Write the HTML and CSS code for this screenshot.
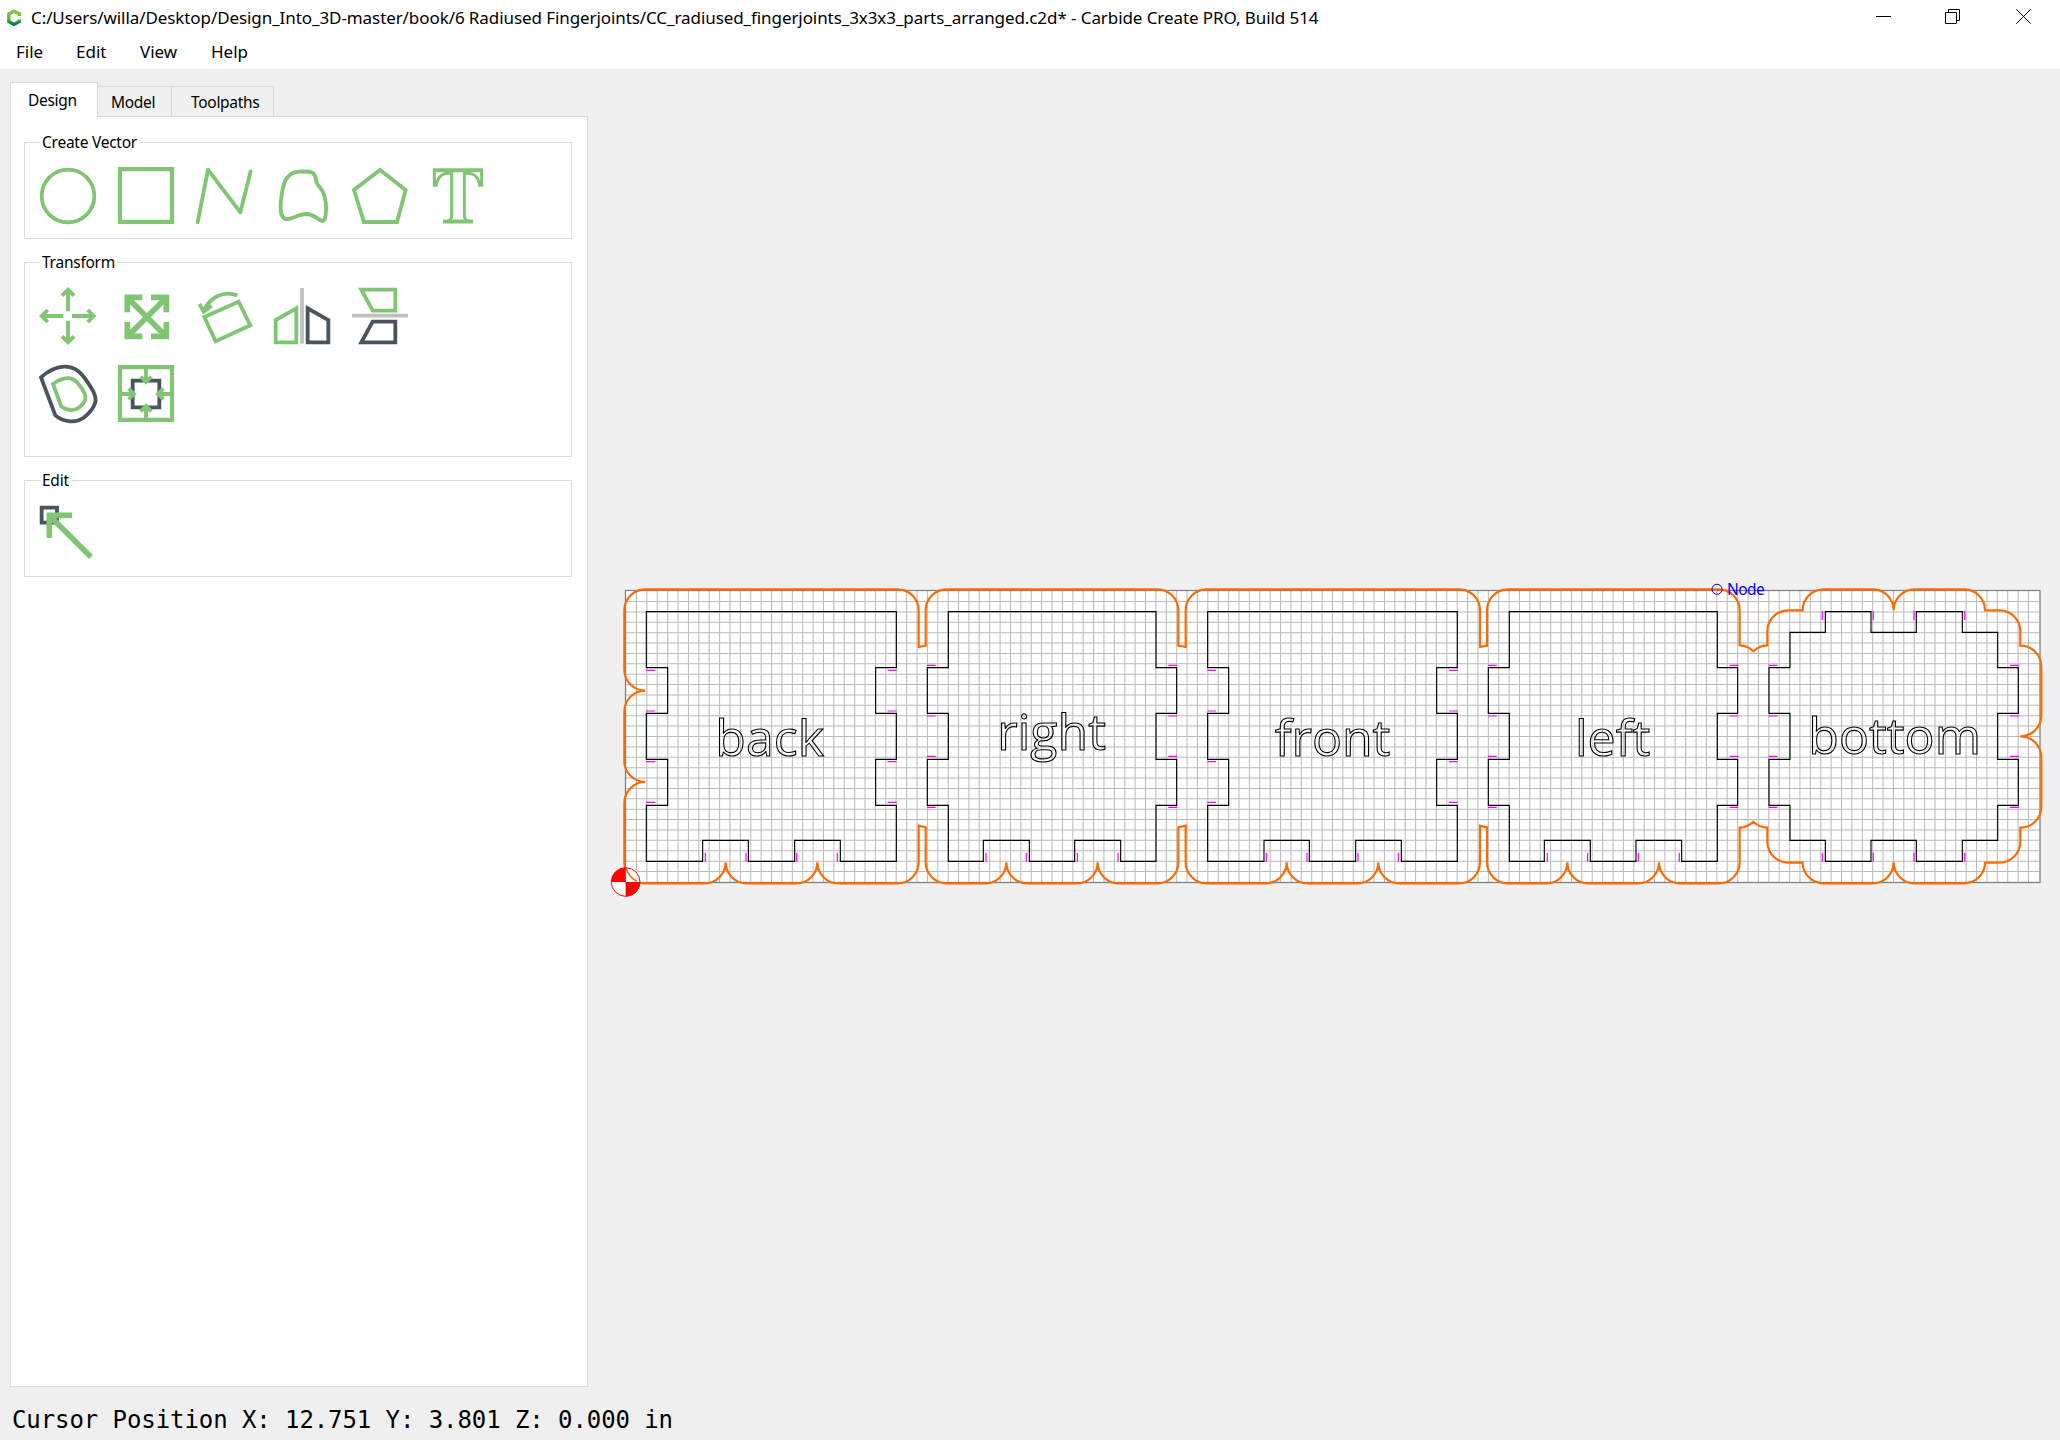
FILE: index.html
```html
<!DOCTYPE html>
<html lang="en">
<head>
<meta charset="utf-8">
<title>Carbide Create PRO</title>
<link rel="stylesheet" href="styles.css">
</head>
<body>
<div class="app">
  <header class="titlebar">
    <svg class="logo" viewBox="0 0 16 18"><defs><linearGradient id="lg" x1="0" y1="0" x2="0" y2="1"><stop offset="0" stop-color="#8dc63f"/><stop offset=".55" stop-color="#5cb848"/><stop offset="1" stop-color="#007a3d"/></linearGradient></defs><path d="M13.4 7V4.8L8 2.2 2.8 5v7.4L8 15.4l5.4-3V10.600" fill="none" stroke="url(#lg)" stroke-width="3.400"/></svg>
    <span class="title">C:/Users/willa/Desktop/Design_Into_3D-master/book/6 Radiused Fingerjoints/CC_radiused_fingerjoints_3x3x3_parts_arranged.c2d* - Carbide Create PRO, Build 514</span>
    <div class="controls">
      <svg viewBox="0 0 16 16"><path d="M0 7.500H15"/></svg>
      <svg viewBox="0 0 16 16"><path d="M.5 3.500H11.500V14.500H.5ZM3.500 3.500V.5H14.500V11.500H11.500"/></svg>
      <svg viewBox="0 0 16 16"><path d="M.3 .3 14.700 14.700M14.700 .3 .3 14.700"/></svg>
    </div>
  </header>
  <nav class="menubar"><span class="m-file">File</span><span class="m-edit">Edit</span><span class="m-view">View</span><span class="m-help">Help</span></nav>
  <main class="workspace">
    <aside class="sidebar">
      <div class="tabs"><div class="tab tab-active">Design</div><div class="tab tab-model">Model</div><div class="tab tab-tool">Toolpaths</div></div>
      <div class="panel">
        <section class="group group-create">
          <h2 class="group-title t-create">Create Vector</h2>
          <div class="tools">
            <svg class="icon" viewBox="54 48 180 180"><circle cx="144" cy="138" r="79"/></svg>
            <svg class="icon" viewBox="288 48 180 180"><path stroke-width="12.500" d="M300 57.500H456V215.500H300Z"/></svg>
            <svg class="icon round" viewBox="522 48 180 180"><path d="M533 217 564 59 661 187 692 64"/></svg>
            <svg class="icon round" viewBox="756 48 180 180"><path d="M836 65C855 64 868 64 877 68C889 74 886 86 890 98C894 108 904 114 909 126C917 146 920 173 917 195C914 214 910 216 900 210C886 202 878 193 860 192C833 192 820 207 800 208C782 206 781 184 782 160C784 137 786 113 796 92C805 75 820 66 836 65Z"/></svg>
            <svg class="icon" viewBox="990 48 180 180"><path d="M1080 60 1157 120 1131 216H1032L1002 120Z"/></svg>
            <svg class="icon" viewBox="1224 48 180 180"><path stroke-width="9" d="M1243 60H1385V106H1379C1374 78 1362 69 1333 69V196Q1333 211 1346 214H1282Q1295 211 1295 196V69C1266 69 1254 78 1249 106H1243Z"/><path d="M1239 61H1389M1269 215H1359"/></svg>
          </div>
        </section>
        <section class="group group-transform">
          <h2 class="group-title t-transform">Transform</h2>
          <div class="tools">
            <svg class="icon" viewBox="54 408 180 180"><path d="M144 484V419M126 437 144 419 162 437M144 512V577M126 559 144 577 162 559M130 498H65M83 480 65 498 83 516M156 498H221M203 480 221 498 203 516"/></svg>
            <svg class="icon" viewBox="288 408 180 180"><g stroke-width="17"><path d="M324 445 437 558M437 445 324 558"/><path d="M367 442H322V487M393 442H439V487M322 516V559H367M393 559H439V516"/></g><path class="fill" d="M316 436H352L316 472ZM445 436V472L409 436ZM316 566V530L352 566ZM445 566H409L445 530Z"/></svg>
            <svg class="icon" viewBox="522 408 180 180"><path d="M553 501 656 455 691 526 587 574ZM652 436C612 421 569 440 551 483M538 462 551 485 575 467"/></svg>
            <svg class="icon" viewBox="756 408 180 180"><path class="grey" d="M846 414V581"/><path d="M829 475V577H767V510Z"/><path class="dark" d="M863 475V577H925V510Z"/></svg>
            <svg class="icon" viewBox="990 408 180 180"><path class="grey" d="M996 497H1164"/><path d="M1024 419H1126V482H1058Z"/><path class="dark" d="M1024 577H1126V515H1058Z"/></svg>
          </div>
          <div class="tools">
            <svg class="icon" viewBox="54 642 180 180"><path class="dark" d="M63 682C82 665 106 652 130 650C166 648 184 669 201 694C218 719 230 737 226 757C220 778 206 792 190 804C165 821 128 815 106 796Z"/><path d="M99 702C118 688 134 682 151 685C170 689 178 705 187 718C197 734 200 744 192 757C175 781 151 788 124 770Z"/></svg>
            <svg class="icon" viewBox="288 642 180 180"><path stroke-width="12.500" d="M300 651.500H456V809.500H300Z"/><path class="dark" d="M338 692H418V772H338Z"/><path d="M378 655V692M362 680 378 696 394 680M378 806V772M362 784 378 768 394 784M304 732H338M326 716 342 732 326 748M452 732H418M430 716 414 732 430 748"/></svg>
          </div>
        </section>
        <section class="group group-edit">
          <h2 class="group-title t-edit">Edit</h2>
          <div class="tools">
            <svg class="icon" viewBox="54 1062 180 180"><path class="dark" d="M65 1073H111V1118H65Z"/><path stroke-width="17" d="M156 1096H88V1164M92 1100 213 1221"/></svg>
          </div>
        </section>
      </div>
    </aside>
    <svg class="canvas" viewBox="605 69 1455 1328">
      <rect x="625.5" y="590.5" width="1414.500" height="292" fill="#fff"/>
      <path class="grid" stroke-width="1414" stroke-dasharray="1 9.385" d="M1332.750 601V875"/>
      <path class="grid" stroke-width="292" stroke-dasharray="1 9.388" d="M636 736.500H2034"/>
      <rect x="625.5" y="590.5" width="1414.500" height="292" class="stock"/>
      <g transform="translate(600 570) scale(.33333)">
        <g>
          <path class="part" d="M139 125H889V293H827V430H889V568H827V706H889V874H721V811H584V874H445V811H308V874H139V706H203V568H139V430H203V293H139Z"/>
          <path class="mark" d="M138 301h27M138 423h27M138 575h27M138 697h27M863 301h27M863 423h27M863 575h27M863 697h27M316 848v27M438 848v27M590 848v27M712 848v27"/>
          <text class="label" x="346" y="557">back</text>
        </g>
        <g transform="translate(930)">
          <path class="part" d="M115 125H738V293H800V430H738V568H800V706H738V874H632V811H494V874H358V811H220V874H115V706H52V568H115V430H52V293H115Z"/>
          <path class="mark" d="M51 286h26M51 438h26M51 559h26M51 712h26M775 286h26M775 438h26M775 559h26M775 712h26M228 848v27M349 848v27M502 848v27M624 848v27"/>
          <text class="label" x="262" y="539">right</text>
        </g>
        <g transform="translate(1710)">
          <path class="part" d="M113 125H862V293H800V430H862V568H800V706H862V874H694V811H557V874H418V811H282V874H113V706H176V568H113V430H176V293H113Z"/>
          <path class="mark" d="M112 301h26M112 423h26M112 575h26M112 697h26M837 301h26M837 423h26M837 575h26M837 697h26M289 848v27M411 848v27M564 848v27M685 848v27"/>
          <text class="label" x="314" y="557">front</text>
        </g>
        <g transform="translate(2610)">
          <path class="part" d="M118 125H742V293H803V430H742V568H803V706H742V874H635V811H498V874H361V811H223V874H118V706H55V568H118V430H55V293H118Z"/>
          <path class="mark" d="M54 286h26M54 438h26M54 559h26M54 712h26M779 286h26M779 438h26M779 559h26M779 712h26M232 848v27M353 848v27M505 848v27M628 848v27"/>
          <text class="label" x="315" y="557">left</text>
        </g>
        <g transform="translate(3390)">
          <path class="part" d="M286 125H423V187H559V125H697V187H803V293H865V430H803V568H865V706H803V811H697V874H559V811H423V874H286V811H180V706H117V568H180V430H117V293H180V187H286Z"/>
          <path class="mark" d="M116 286h26M116 438h26M116 559h26M116 712h26M840 286h27M840 438h27M840 559h27M840 712h27M277 123v27M430 123v27M552 123v27M704 123v27M277 848v27M430 848v27M552 848v27M704 848v27"/>
          <text class="label" x="235" y="553">bottom</text>
        </g>
        <path class="profile" d="M73 121A63 63 0 0 1 136 58H893A63 63 0 0 1 956 121V231L977 227V121A63 63 0 0 1 1040 58H1672A63 63 0 0 1 1735 121V227L1757 231V121A63 63 0 0 1 1820 58H2577A63 63 0 0 1 2640 121V231L2661 227V121A63 63 0 0 1 2724 58H3356A63 63 0 0 1 3419 121V226A63 63 0 0 1 3460 244A63 63 0 0 1 3502 226V184A63 63 0 0 1 3565 121H3608A63 63 0 0 1 3671 58H3818A63 63 0 0 1 3881 121A63 63 0 0 1 3944 58H4092A63 63 0 0 1 4155 121H4198A63 63 0 0 1 4261 184V227A63 63 0 0 1 4324 290V437A63 63 0 0 1 4261 499A63 63 0 0 1 4324 562V710A63 63 0 0 1 4261 773V815A63 63 0 0 1 4198 878H4155A63 63 0 0 1 4092 940H3944A63 63 0 0 1 3881 877A63 63 0 0 1 3818 940H3671A63 63 0 0 1 3608 878H3565A63 63 0 0 1 3502 815V773A63 63 0 0 1 3460 755A63 63 0 0 1 3419 773V877A63 63 0 0 1 3356 940H3240A63 63 0 0 1 3177 877A63 63 0 0 1 3114 940H2965A63 63 0 0 1 2902 877A63 63 0 0 1 2839 940H2724A63 63 0 0 1 2661 877V772L2640 767V877A63 63 0 0 1 2577 940H2398A63 63 0 0 1 2335 877A63 63 0 0 1 2272 940H2123A63 63 0 0 1 2060 877A63 63 0 0 1 1997 940H1820A63 63 0 0 1 1757 877V767L1735 772V877A63 63 0 0 1 1672 940H1556A63 63 0 0 1 1493 877A63 63 0 0 1 1430 940H1282A63 63 0 0 1 1219 877A63 63 0 0 1 1156 940H1040A63 63 0 0 1 977 877V772L956 767V877A63 63 0 0 1 893 940H715A63 63 0 0 1 652 877A63 63 0 0 1 589 940H440A63 63 0 0 1 377 877A63 63 0 0 1 314 940H136A63 63 0 0 1 73 877V699A63 63 0 0 1 136 636A63 63 0 0 1 73 573V425A63 63 0 0 1 136 362A63 63 0 0 1 73 299Z"/>
        <path fill="#fff" d="M77 936H34A43 43 0 0 0 77 979Z"/>
        <path fill="#fff" d="M77 936V893A43 43 0 0 1 120 936Z"/>
        <path fill="none" stroke="#ff6a00" stroke-width="5" d="M77 893Q86 920 110 934"/>
        <path fill="#f00" d="M77 936V893A43 43 0 0 0 34 936ZM77 936V979A43 43 0 0 0 120 936Z"/>
        <circle cx="77" cy="936" r="43" fill="none" stroke="#f00" stroke-width="3"/>
      </g>
      <circle cx="1717" cy="589.300" r="5" fill="none" stroke="#00f"/>
      <text class="node" x="1727" y="594.500">Node</text>
    </svg>
  </main>
  <footer class="status">Cursor Position X: 12.751 Y: 3.801 Z: 0.000 in</footer>
</div>
</body>
</html>
```
FILE: styles.css
```css
* { box-sizing: border-box; }
body { margin: 0; font-family: "Noto Sans", sans-serif; color: #000; background: #efefef; }
.app { width: 2060px; height: 1440px; display: flex; flex-direction: column; overflow: hidden; }
.titlebar { height: 36px; background: #fff; display: flex; align-items: center; padding-left: 6px; }
.logo { width: 16px; height: 18px; margin-right: 9px; }
.title { font-size: 17px; line-height: 35px; height: 36px; letter-spacing: -.083px; white-space: nowrap; }
.controls { margin-left: auto; display: flex; gap: 54px; padding-right: 28px; margin-top: -2px; }
.controls svg { width: 16px; height: 16px; fill: none; stroke: #000; stroke-width: 1; }
.controls svg:nth-child(2) { margin-left: -1px; margin-right: 1px; }
.menubar { height: 33px; background: #fff; display: flex; font-size: 17px; line-height: 31px; padding-left: 16px; }
.m-file { width: 60px; }
.m-edit { width: 64px; }
.m-view { width: 71px; }
.workspace { height: 1328px; display: flex; }
.sidebar { width: 605px; padding: 13px 17px 10px 10px; display: flex; flex-direction: column; }
.tabs { display: flex; align-items: flex-end; height: 34px; font-size: 15.5px; letter-spacing: -.3px; }
.tab { height: 30px; border: 1px solid #d9d9d9; border-left: 0; border-bottom: 0; line-height: 30px; white-space: nowrap; background: #f0f0f0; }
.tab-active { width: 88px; height: 35px; margin-bottom: -1px; border-left: 1px solid #d9d9d9; background: #fff; padding-left: 17px; line-height: 35px; position: relative; }
.tab-model { width: 74px; padding-left: 13px; }
.tab-tool { width: 102px; padding-left: 19px; }
.panel { width: 578px; height: 1271px; background: #fff; border: 1px solid #d9d9d9; padding: 25px 14px 0 13px; display: flex; flex-direction: column; }
.group { border: 1px solid #dcdcdc; width: 548px; padding-left: 13px; }
.group-create { height: 97px; margin-bottom: 23px; }
.group-transform { height: 195px; margin-bottom: 23px; }
.group-edit { height: 97px; }
.group-title { font-size: 15.5px; letter-spacing: -.25px; font-weight: 400; line-height: 22px; height: 22px; margin: -12px 0 13px 2px; padding: 0 3px 0 2px; background: #fff; width: max-content; }
.tools { display: flex; gap: 18px; margin-bottom: 18px; }
.icon { width: 60px; height: 60px; fill: none; stroke: #80c474; stroke-width: 11.5; }
.round { stroke-linecap: round; stroke-linejoin: round; }
.icon .dark { stroke: #4a545c; }
.icon .grey { stroke: #c0c0c0; }
.icon .fill { fill: #80c474; stroke: none; }
.canvas { width: 1455px; height: 1328px; background: #f0f0f0; }
.grid { stroke: #bababa; fill: none; }
.stock { fill: none; stroke: #808080; stroke-width: 1.3; }
.part { fill: none; stroke: #000; stroke-width: 3.4; }
.mark { fill: none; stroke: #f0f; stroke-width: 3.6; }
.profile { fill: none; stroke: #ff6a00; stroke-width: 6.5; }
.label { font-family: "Open Sans", sans-serif; font-size: 150px; fill: none; stroke: #000; stroke-width: 3.3; }
.node { font-size: 15.5px; letter-spacing: -.6px; fill: #00f; }
.status { height: 43px; padding-left: 12px; font-family: "DejaVu Sans Mono", monospace; font-size: 24px; letter-spacing: -.08px; line-height: 47px; white-space: pre; }
```
